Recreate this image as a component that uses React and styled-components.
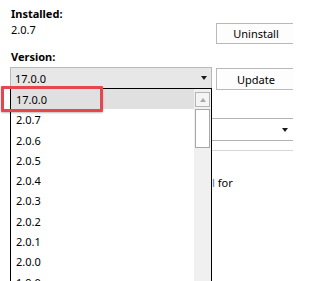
import React from 'react';
import styled, { createGlobalStyle } from 'styled-components';

const GlobalStyle = createGlobalStyle`
  html, body {
    margin: 0;
    padding: 0;
    background: #ffffff;
  }
  body {
    font-family: "Noto Sans", "Open Sans", "DejaVu Sans", sans-serif;
    font-size: 11px;
    color: #000000;
  }
`;

const Page = styled.div`
  position: relative;
  width: 293px;
  height: 281px;
  overflow: hidden;
  box-sizing: border-box;
  padding: 6px 0 0 10px;
`;

const Row = styled.div`
  display: grid;
  grid-template-columns: 202px 100px;
  column-gap: 4px;
  align-items: start;
  margin-top: ${p => p.$top || 0}px;
`;

const Field = styled.div`
  display: flex;
  flex-direction: column;
`;

const Label = styled.div`
  font-weight: 700;
  line-height: 16px;
  padding-left: 1px;
  margin-top: ${p => p.$top || 0}px;
`;

const Value = styled.div`
  line-height: 16px;
  padding-left: 1px;
`;

const Button = styled.button`
  box-sizing: border-box;
  height: ${p => p.$height || 21}px;
  margin-top: ${p => p.$top || 0}px;
  width: 100px;
  padding: 0 20px 0 0;
  font: inherit;
  color: #000;
  background: #fdfdfd;
  border: 1px solid #b9b9b9;
  text-align: center;
`;

const Combo = styled.div`
  box-sizing: border-box;
  height: ${p => p.$height || 22}px;
  display: flex;
  align-items: center;
  justify-content: space-between;
  padding: 0 4px 0 4px;
  background: ${p => (p.$light ? '#ffffff' : '#e7e7e7')};
  border: 1px solid ${p => (p.$light ? '#b2b2b2' : '#b8b8b8')};
  border-left-width: ${p => (p.$light ? 0 : 1)}px;
`;

const Arrow = styled.span`
  width: 0;
  height: 0;
  border-left: 3.5px solid transparent;
  border-right: 3.5px solid transparent;
  border-top: 4px solid #1a1a1a;
  margin-right: ${p => p.$right || 0}px;
`;

const WideCombo = styled(Combo)`
  width: 287px;
  margin-top: 28px;
`;

const Separator = styled.div`
  width: 287px;
  height: 1px;
  margin-top: 9px;
  background: #d6d6d6;
`;

const Hint = styled.div`
  line-height: 16px;
  margin-top: 24px;
  padding-left: 202px;
`;

const Stem = styled.span`
  color: #3b78c2;
`;

const DropList = styled.div`
  position: absolute;
  left: 10px;
  top: 88px;
  width: 202px;
  height: 215px;
  box-sizing: border-box;
  border: 1px solid #000000;
  background: #ffffff;
  display: flex;
`;

const Items = styled.div`
  flex: 1;
  display: flex;
  flex-direction: column;
`;

const Item = styled.div`
  height: 20.3px;
  line-height: 22px;
  padding-left: 5px;
  background: ${p => (p.$active ? '#e0e0e0' : 'transparent')};
`;

const ScrollTrack = styled.div`
  width: 17px;
  background: #f0f0f0;
  display: flex;
  flex-direction: column;
  align-items: center;
  padding-top: 3px;
  gap: 2px;
`;

const ScrollButton = styled.div`
  box-sizing: border-box;
  width: 15px;
  height: 15px;
  border: 1px solid #b4b4b4;
  background: #f4f4f4;
  display: flex;
  align-items: center;
  justify-content: center;
`;

const UpGlyph = styled.span`
  width: 0;
  height: 0;
  border-left: 3.5px solid transparent;
  border-right: 3.5px solid transparent;
  border-bottom: 4px solid #a8a8a8;
`;

const Thumb = styled.div`
  box-sizing: border-box;
  width: 15px;
  height: 39px;
  border: 1px solid #a8a8a8;
  background: #ffffff;
`;

const Callout = styled.div`
  position: absolute;
  left: 1px;
  top: 86px;
  width: 102px;
  height: 26px;
  box-sizing: border-box;
  border: 3px solid #e5474c;
  border-radius: 1px;
  box-shadow: 0 1px 2px rgba(0, 0, 0, 0.25);
`;

const versions = ['17.0.0', '2.0.7', '2.0.6', '2.0.5', '2.0.4', '2.0.3', '2.0.2', '2.0.1', '2.0.0', '1.9.0'];

export default function App() {
  return (
    <>
      <GlobalStyle />
      <Page>
        <Row>
          <Field>
            <Label>Installed:</Label>
            <Value>2.0.7</Value>
          </Field>
          <Button $top={17}>Uninstall</Button>
        </Row>
        <Label $top={5}>Version:</Label>
        <Row $top={2}>
          <Combo>
            <span>17.0.0</span>
            <Arrow $right={0} />
          </Combo>
          <Button $top={1} $height={22}>Update</Button>
        </Row>
        <WideCombo $light $height={23}>
          <span />
          <Arrow $right={4} />
        </WideCombo>
        <Separator />
        <Hint>
          <Stem>l</Stem> for
        </Hint>

        <DropList>
          <Items>
            {versions.map((v, i) => (
              <Item key={v} $active={i === 0}>{v}</Item>
            ))}
          </Items>
          <ScrollTrack>
            <ScrollButton>
              <UpGlyph />
            </ScrollButton>
            <Thumb />
          </ScrollTrack>
        </DropList>
        <Callout />
      </Page>
    </>
  );
}
